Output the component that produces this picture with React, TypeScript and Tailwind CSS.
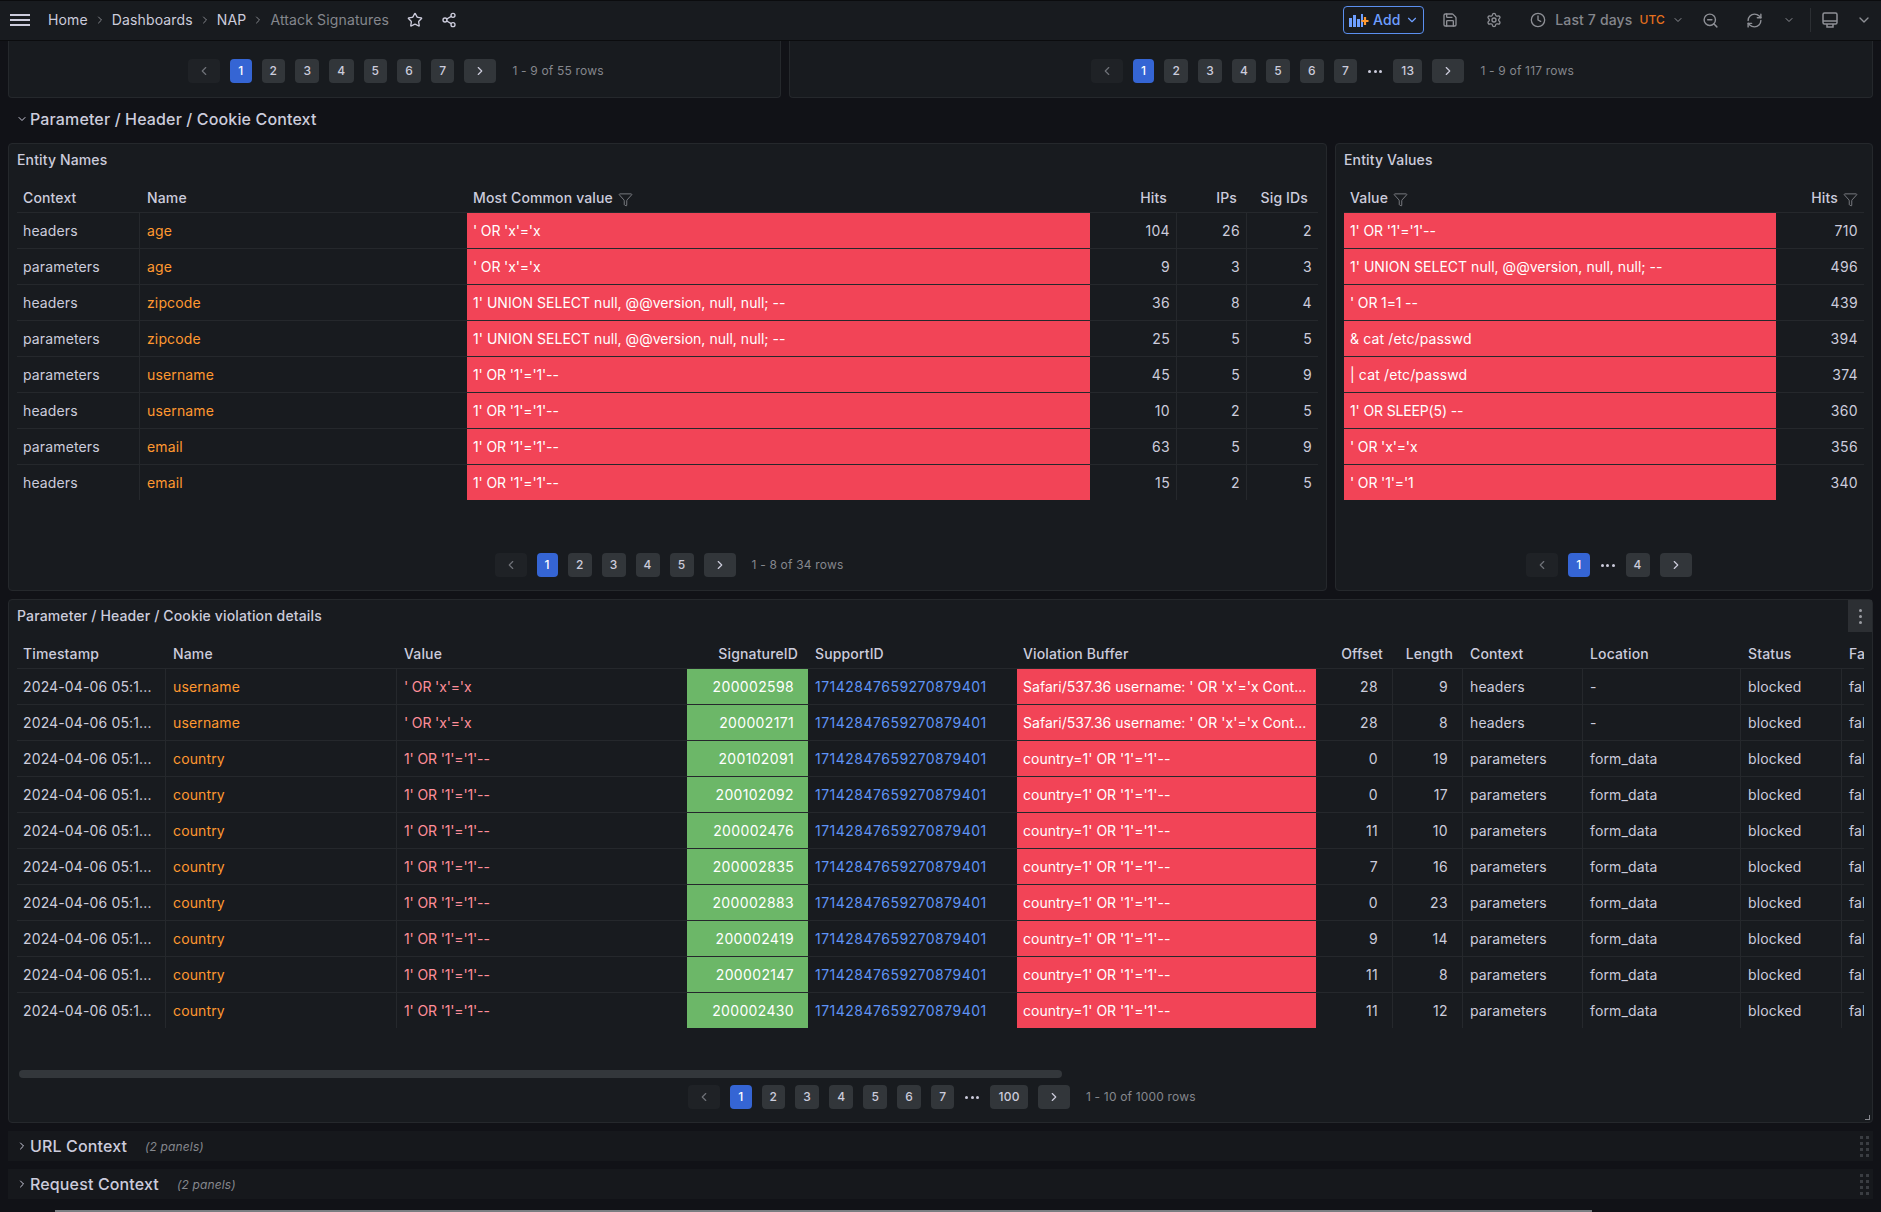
import React from "react";
import {
  ChevronDown,
  ChevronLeft,
  ChevronRight,
  Clock,
  Filter,
  RefreshCw,
  Save,
  Settings,
  Share2,
  Star,
  ZoomOut,
} from "lucide-react";

const RED = "bg-[#f24457] text-white";
const GREEN = "bg-[#6cb768] text-white tracking-[0.025em]";
const NUM = "text-right tracking-[0.025em]";

const entityNames = [
  ["headers", "age", "' OR 'x'='x", "104", "26", "2"],
  ["parameters", "age", "' OR 'x'='x", "9", "3", "3"],
  ["headers", "zipcode", "1' UNION SELECT null, @@version, null, null; --", "36", "8", "4"],
  ["parameters", "zipcode", "1' UNION SELECT null, @@version, null, null; --", "25", "5", "5"],
  ["parameters", "username", "1' OR '1'='1'--", "45", "5", "9"],
  ["headers", "username", "1' OR '1'='1'--", "10", "2", "5"],
  ["parameters", "email", "1' OR '1'='1'--", "63", "5", "9"],
  ["headers", "email", "1' OR '1'='1'--", "15", "2", "5"],
];

const entityValues = [
  ["1' OR '1'='1'--", "710"],
  ["1' UNION SELECT null, @@version, null, null; --", "496"],
  ["' OR 1=1 --", "439"],
  ["& cat /etc/passwd", "394"],
  ["| cat /etc/passwd", "374"],
  ["1' OR SLEEP(5) --", "360"],
  ["' OR 'x'='x", "356"],
  ["' OR '1'='1", "340"],
];

const safari = "Safari/537.36 username: ' OR 'x'='x Cont...";
const country = "country=1' OR '1'='1'--";
const violations = [
  ["username", "' OR 'x'='x", "200002598", safari, "28", "9", "headers", "-"],
  ["username", "' OR 'x'='x", "200002171", safari, "28", "8", "headers", "-"],
  ["country", "1' OR '1'='1'--", "200102091", country, "0", "19", "parameters", "form_data"],
  ["country", "1' OR '1'='1'--", "200102092", country, "0", "17", "parameters", "form_data"],
  ["country", "1' OR '1'='1'--", "200002476", country, "11", "10", "parameters", "form_data"],
  ["country", "1' OR '1'='1'--", "200002835", country, "7", "16", "parameters", "form_data"],
  ["country", "1' OR '1'='1'--", "200002883", country, "0", "23", "parameters", "form_data"],
  ["country", "1' OR '1'='1'--", "200002419", country, "9", "14", "parameters", "form_data"],
  ["country", "1' OR '1'='1'--", "200002147", country, "11", "8", "parameters", "form_data"],
  ["country", "1' OR '1'='1'--", "200002430", country, "11", "12", "parameters", "form_data"],
];

const th = "h-[35px] align-bottom pb-[4px] px-[6px] font-medium border-b border-[#25282c] whitespace-nowrap overflow-hidden";
const td = "h-[36px] px-[6px] border-b border-[#25282c] whitespace-nowrap overflow-hidden";
const tdLast = "h-[35px] px-[6px] whitespace-nowrap overflow-hidden";
const sep = "border-r border-[#25282c]";

// quotes sit tighter in the payload strings
const payloadTracking = (value: string) => {
  if (value.includes("UNION") || value.includes("Safari")) return "tracking-[0.002em]";
  if (value.includes("country")) return "tracking-normal";
  if (value.includes("'")) return "tracking-[-0.01em]";
  return "";
};

const Pager = ({ pages, info }: { pages: string[]; info?: string }) => (
  <div className="flex h-6 items-center justify-center gap-[10px] pl-[3px] text-xs font-medium tracking-[0.03em]">
    <div className="flex h-6 w-8 items-center justify-center rounded-sm bg-[#1f2226] text-[#6f7278]">
      <ChevronLeft size={14} />
    </div>
    {pages.map((page, key) =>
      page === "..." ? (
        <div key={key} className="flex w-4 items-center justify-between px-[1px]">
          <span className="h-[3px] w-[3px] rounded-full bg-[#ccccdc]" />
          <span className="h-[3px] w-[3px] rounded-full bg-[#ccccdc]" />
          <span className="h-[3px] w-[3px] rounded-full bg-[#ccccdc]" />
        </div>
      ) : (
        <div
          key={key}
          className={
            page === "1"
              ? "flex h-6 items-center rounded-sm bg-[#3565d4] px-2 text-white"
              : "flex h-6 items-center rounded-sm bg-[#32363a] px-2 text-[#ccccdc]"
          }
        >
          {page}
        </div>
      )
    )}
    <div className="flex h-6 w-8 items-center justify-center rounded-sm bg-[#32363a] text-[#ccccdc]">
      <ChevronRight size={14} />
    </div>
    {info && <div className="ml-[6px] font-normal tracking-[0.015em] text-[#85878d]">{info}</div>}
  </div>
);

const DragDots = () => (
  <svg width="9" height="21" viewBox="0 0 9 21" className="fill-[#3a3d42]">
    {[0, 6, 12, 18].map((y) => (
      <g key={y}>
        <rect x="0" y={y} width="3" height="3" />
        <rect x="6" y={y} width="3" height="3" />
      </g>
    ))}
  </svg>
);

const CollapsedRow = ({ title }: { title: string }) => (
  <div className="flex h-[30px] items-center bg-[#16181c] pl-2 pr-[4px]">
    <ChevronRight size={12} className="mr-[2px] text-[#ccccdc]" />
    <div className="text-base font-medium text-[#ccccdc]">{title}</div>
    <div className="ml-[18px] pt-[2px] text-xs italic text-[#85878d]">(2 panels)</div>
    <div className="ml-auto flex">
      <DragDots />
    </div>
  </div>
);

const FilterIcon = () => (
  <Filter size={15} strokeWidth={1.4} className="ml-[5px] inline-block text-[#85878d]" />
);

const AddIcon = () => (
  <svg width="20" height="14" viewBox="0 0 20 14">
    <rect x="0" y="5" width="3" height="9" fill="#6e9fff" />
    <rect x="4" y="2" width="3" height="12" fill="#6e9fff" />
    <rect x="8" y="6" width="3" height="8" fill="#6e9fff" />
    <rect x="12" y="1" width="2" height="13" fill="#6e9fff" />
    <path d="M16 4v8M12.5 8h7" stroke="#ff9830" strokeWidth="2.2" />
  </svg>
);

const MonitorIcon = () => (
  <svg width="18" height="18" viewBox="0 0 18 18" fill="none" stroke="#8e9096" strokeWidth="1.5">
    <rect x="2" y="2" width="14" height="11" rx="1.5" />
    <path d="M2 10h14" />
    <path d="M6 13v3h6v-3" />
  </svg>
);

const iconGray = "text-[#8e9096]";

const TopBar = () => (
  <div className="flex h-[41px] items-center border-b border-t border-[#0b0c0e] bg-[#181b1f] pb-[1px] text-sm text-[#ccccdc]">
    <div className="ml-[10px] flex h-[12px] w-5 flex-col justify-between">
      <span className="h-[2px] bg-[#ccccdc]" />
      <span className="h-[2px] bg-[#ccccdc]" />
      <span className="h-[2px] bg-[#ccccdc]" />
    </div>
    <span className="ml-[18px]">Home</span>
    <ChevronRight size={12} className="mx-[6px] text-[#85878d]" />
    <span>Dashboards</span>
    <ChevronRight size={12} className="mx-[6px] text-[#85878d]" />
    <span>NAP</span>
    <ChevronRight size={12} className="mx-[6px] text-[#85878d]" />
    <span className="text-[#85878d]">Attack Signatures</span>
    <Star size={16} className="ml-[18px] text-[#ccccdc]" />
    <Share2 size={16} className="ml-[18px] text-[#ccccdc]" />

    <div className="ml-auto flex items-center pr-[9px]">
      <div className="flex h-7 w-[81px] items-center justify-center gap-[4px] rounded-sm border border-[#5b8fef] font-medium text-[#6e9fff]">
        <AddIcon />
        <span>Add</span>
        <ChevronDown size={14} />
      </div>
      <Save size={16} className={`ml-[18px] ${iconGray}`} />
      <Settings size={16} className={`ml-[28px] ${iconGray}`} />
      <Clock size={16} className={`ml-[28px] ${iconGray}`} />
      <span className="ml-[9px] font-medium text-[#85878d]">Last 7 days</span>
      <span className="ml-[7px] text-xs font-medium text-[#e5701e]">UTC</span>
      <ChevronDown size={12} className={`ml-[7px] ${iconGray}`} />
      <ZoomOut size={17} className={`ml-[18px] ${iconGray}`} />
      <RefreshCw size={17} className={`ml-[27px] ${iconGray}`} />
      <ChevronDown size={12} className={`ml-[20px] ${iconGray}`} />
      <div className="ml-[15px] h-6 w-px bg-[#2c2f33]" />
      <div className="ml-[10px]">
        <MonitorIcon />
      </div>
      <ChevronDown size={16} className={`ml-[17px] ${iconGray}`} />
    </div>
  </div>
);

const PanelTitle = ({ title }: { title: string }) => (
  <div className="flex h-[34px] items-center px-2 pb-[2px] text-sm font-medium text-[#ccccdc]">{title}</div>
);

const EntityNames = () => (
  <div className="flex h-[448px] w-[1319px] flex-col rounded-sm border border-[#25282c] bg-[#181b1f]">
    <PanelTitle title="Entity Names" />
    <div className="flex-1 px-2">
      <table className="w-[1301px] table-fixed border-separate border-spacing-0">
        <colgroup>
          <col className="w-[123px]" />
          <col className="w-[327px]" />
          <col className="w-[623px]" />
          <col className="w-[87px]" />
          <col className="w-[70px]" />
          <col className="w-[71px]" />
        </colgroup>
        <thead>
          <tr>
            <th className={`${th} text-left`}>Context</th>
            <th className={`${th} pl-[7px] text-left`}>Name</th>
            <th className={`${th} text-left`}>
              Most Common value
              <FilterIcon />
            </th>
            <th className={`${th} pr-[10px] text-right`}>Hits</th>
            <th className={`${th} pr-[10px] text-right`}>IPs</th>
            <th className={`${th} pr-[10px] text-right`}>Sig IDs</th>
          </tr>
        </thead>
        <tbody>
          {entityNames.map((row, key) => {
            const cell = key === entityNames.length - 1 ? tdLast : td;
            return (
              <tr key={key}>
                <td className={`${cell} ${sep}`}>{row[0]}</td>
                <td className={`${cell} pl-[7px] text-[#ff9830]`}>{row[1]}</td>
                <td className={`${cell} ${RED} ${payloadTracking(row[2])}`}>{row[2]}</td>
                <td className={`${cell} ${sep} ${NUM}`}>{row[3]}</td>
                <td className={`${cell} ${sep} ${NUM}`}>{row[4]}</td>
                <td className={`${cell} ${NUM}`}>{row[5]}</td>
              </tr>
            );
          })}
        </tbody>
      </table>
    </div>
    <div className="mb-[13px]">
      <Pager pages={["1", "2", "3", "4", "5"]} info="1 - 8 of 34 rows" />
    </div>
  </div>
);

const EntityValues = () => (
  <div className="flex h-[448px] flex-1 flex-col rounded-sm border border-[#25282c] bg-[#181b1f]">
    <PanelTitle title="Entity Values" />
    <div className="flex-1 px-2">
      <table className="w-[520px] table-fixed border-separate border-spacing-0">
        <colgroup>
          <col className="w-[432px]" />
          <col className="w-[88px]" />
        </colgroup>
        <thead>
          <tr>
            <th className={`${th} text-left`}>
              Value
              <FilterIcon />
            </th>
            <th className={`${th} pr-[6px] text-right`}>
              Hits
              <FilterIcon />
            </th>
          </tr>
        </thead>
        <tbody>
          {entityValues.map((row, key) => {
            const cell = key === entityValues.length - 1 ? tdLast : td;
            return (
              <tr key={key}>
                <td className={`${cell} ${RED} ${payloadTracking(row[0])}`}>{row[0]}</td>
                <td className={`${cell} ${NUM}`}>{row[1]}</td>
              </tr>
            );
          })}
        </tbody>
      </table>
    </div>
    <div className="mb-[13px] pl-[7px]">
      <Pager pages={["1", "...", "4"]} />
    </div>
  </div>
);

const ViolationDetails = () => (
  <div className="relative h-[524px] rounded-sm border border-[#25282c] bg-[#181b1f]">
    <PanelTitle title="Parameter / Header / Cookie violation details" />
    {/* panel menu button */}
    <div className="absolute right-0 top-0 flex h-8 w-6 flex-col items-center justify-center gap-[3px] bg-[#2c2f33]">
      <span className="h-[3px] w-[3px] rounded-full bg-[#9a9ca2]" />
      <span className="h-[3px] w-[3px] rounded-full bg-[#9a9ca2]" />
      <span className="h-[3px] w-[3px] rounded-full bg-[#9a9ca2]" />
    </div>
    <div className="px-2">
      <table className="w-[1847px] table-fixed border-separate border-spacing-0">
        <colgroup>
          <col className="w-[149px]" />
          <col className="w-[231px]" />
          <col className="w-[290px]" />
          <col className="w-[121px]" />
          <col className="w-[209px]" />
          <col className="w-[299px]" />
          <col className="w-[77px]" />
          <col className="w-[70px]" />
          <col className="w-[120px]" />
          <col className="w-[158px]" />
          <col className="w-[101px]" />
          <col className="w-[22px]" />
        </colgroup>
        <thead>
          <tr>
            <th className={`${th} text-left`}>Timestamp</th>
            <th className={`${th} pl-[7px] text-left`}>Name</th>
            <th className={`${th} pl-[7px] text-left`}>Value</th>
            <th className={`${th} pr-[10px] text-right`}>SignatureID</th>
            <th className={`${th} pl-[7px] text-left`}>SupportID</th>
            <th className={`${th} text-left`}>Violation Buffer</th>
            <th className={`${th} pr-[10px] text-right`}>Offset</th>
            <th className={`${th} pr-[10px] text-right`}>Length</th>
            <th className={`${th} pl-[7px] text-left`}>Context</th>
            <th className={`${th} pl-[7px] text-left`}>Location</th>
            <th className={`${th} pl-[7px] text-left`}>Status</th>
            <th className={`${th} pl-[7px] pr-0 text-left`}>Fa</th>
          </tr>
        </thead>
        <tbody>
          {violations.map((row, key) => {
            const cell = key === violations.length - 1 ? tdLast : td;
            return (
              <tr key={key}>
                <td className={`${cell} ${sep}`}>2024-04-06 05:1...</td>
                <td className={`${cell} ${sep} pl-[7px] text-[#ff9830]`}>{row[0]}</td>
                <td className={`${cell} pl-[7px] text-[#ff8e99] ${payloadTracking(row[1])}`}>{row[1]}</td>
                <td className={`${cell} ${GREEN} pr-[14px] text-right`}>{row[2]}</td>
                <td className={`${cell} pl-[7px] tracking-[0.035em] text-[#5f93f5]`}>17142847659270879401</td>
                <td className={`${cell} ${RED} ${payloadTracking(row[3])}`}>{row[3]}</td>
                <td className={`${cell} ${sep} pr-[14px] ${NUM}`}>{row[4]}</td>
                <td className={`${cell} ${sep} pr-[14px] ${NUM}`}>{row[5]}</td>
                <td className={`${cell} ${sep} pl-[7px]`}>{row[6]}</td>
                <td className={`${cell} ${sep} pl-[7px]`}>{row[7]}</td>
                <td className={`${cell} ${sep} pl-[7px]`}>blocked</td>
                <td className={`${cell} pl-[7px] pr-0`}>fal</td>
              </tr>
            );
          })}
        </tbody>
      </table>
      <div className="ml-[2px] mt-[42px] h-2 w-[1043px] rounded-full bg-[#33373b]" />
    </div>
    <div className="mt-[7px]">
      <Pager pages={["1", "2", "3", "4", "5", "6", "7", "...", "100"]} info="1 - 10 of 1000 rows" />
    </div>
    {/* resize handle */}
    <div className="absolute bottom-[2px] right-[2px] h-[5px] w-[5px] border-b border-r border-[#85878d]" />
  </div>
);

const App = () => {
  return (
    <div className="relative h-[1212px] overflow-hidden bg-[#111217] text-sm tracking-[0.01em] text-[#ccccdc] [font-family:Inter,sans-serif]">
      <TopBar />
      <div className="px-2">
        <div className="flex gap-2">
          <div className="h-[57px] w-[773px] rounded-b-sm border border-t-0 border-[#25282c] bg-[#181b1f] pt-[18px]">
            <Pager pages={["1", "2", "3", "4", "5", "6", "7"]} info="1 - 9 of 55 rows" />
          </div>
          <div className="h-[57px] flex-1 rounded-b-sm border border-t-0 border-[#25282c] bg-[#181b1f] pt-[18px]">
            <Pager pages={["1", "2", "3", "4", "5", "6", "7", "...", "13"]} info="1 - 9 of 117 rows" />
          </div>
        </div>

        <div className="flex h-[45px] items-center pb-[3px] pl-2">
          <ChevronDown size={12} className="mr-[2px]" />
          <div className="text-base font-medium">Parameter / Header / Cookie Context</div>
        </div>

        <div className="flex gap-2">
          <EntityNames />
          <EntityValues />
        </div>

        <div className="mt-2">
          <ViolationDetails />
        </div>

        <div className="mt-2 flex flex-col gap-2">
          <CollapsedRow title="URL Context" />
          <CollapsedRow title="Request Context" />
        </div>
      </div>
      {/* page scrollbar */}
      <div className="absolute bottom-0 left-[55px] h-[2px] w-[1537px] bg-[#7b7e82]" />
    </div>
  );
};

export default App;
